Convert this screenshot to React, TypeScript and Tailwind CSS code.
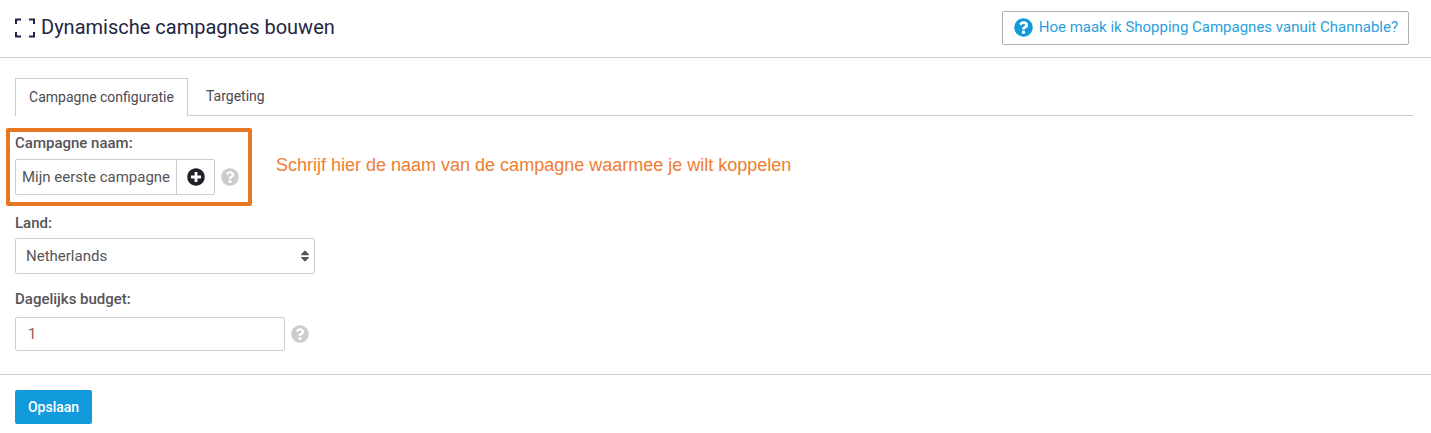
import { FaPlusCircle, FaQuestionCircle, FaSort } from 'react-icons/fa';

const App = () => {
  return (
    <div className="h-[433px] w-[1431px] overflow-hidden bg-white font-['Roboto',sans-serif] text-[14px] text-[#555459]">
      {/* Header */}
      <div className="flex h-[58px] items-center justify-between border-b border-[#cccccc] pl-[15px] pr-[22px]">
        <div className="-mt-[2px] flex items-center gap-[6px]">
          <svg width="20" height="20" viewBox="0 0 20 20" fill="none" stroke="#1e2742" strokeWidth="2">
            <path d="M1 6V1.5H6" />
            <path d="M14 1.5H19V6" />
            <path d="M1 14V18.5H6" />
            <path d="M14 18.5H19V14" />
          </svg>
          <h1 className="-mt-[2px] text-[20px] leading-[24px] text-[#1e2742]">Dynamische campagnes bouwen</h1>
        </div>
        <a className="-mt-[2px] flex h-[34px] items-center gap-[6px] rounded-[2px] border border-[#aeaebd] pl-[11px] pr-[10px] text-[15px] text-[#2a9fdc]">
          <FaQuestionCircle className="h-[19px] w-[19px] text-[#129bdb]" />
          Hoe maak ik Shopping Campagnes vanuit Channable?
        </a>
      </div>

      {/* Tabs */}
      <div className="ml-[15px] mr-[18px] mt-[20px] flex h-[38px] border-b border-[#cccccc]">
        <div className="flex h-[38px] w-[173px] items-center justify-center border border-b-0 border-[#cccccc] bg-white text-[#4a4a55]">
          Campagne configuratie
        </div>
        <div className="flex h-[37px] items-center pl-[18px] text-[#4a4a55]">Targeting</div>
      </div>

      {/* Form */}
      <div className="mt-[12px] flex items-start">
        <div className="ml-[6px] h-[78px] w-[246px] rounded-[2px] border-[4px] border-[#e87722] pl-[5px]">
          <label className="block pt-[2px] text-[15px] font-medium leading-[18px]">Campagne naam:</label>
          <div className="mt-[7px] flex items-center">
            <div className="flex h-[36px] w-[200px] rounded-[2px] border border-[#cccccc]">
              <div className="flex w-[161px] items-center whitespace-nowrap border-r border-[#cccccc] pl-[6px] text-[15px] text-[#555459]">Mijn eerste campagne</div>
              <div className="flex flex-1 items-center justify-center">
                <FaPlusCircle className="h-[18px] w-[18px] text-[#1f2329]" />
              </div>
            </div>
            <FaQuestionCircle className="ml-[6px] h-[18px] w-[18px] text-[#cccccc]" />
          </div>
        </div>
        <p className="ml-[24px] mt-[27px] font-['Liberation_Sans',sans-serif] text-[18px] leading-[20px] text-[#ed7d31]">
          Schrijf hier de naam van de campagne waarmee je wilt koppelen
        </p>
      </div>

      <div className="pl-[15px]">
        <label className="mt-[8px] block text-[15px] font-medium leading-[18px]">Land:</label>
        <div className="mt-[6px] flex h-[36px] w-[300px] items-center justify-between rounded-[2px] border border-[#cccccc] pl-[10px] pr-[2px] text-[15px]">
          <span>Netherlands</span>
          <FaSort className="h-[14px] w-[14px] text-[#555459]" />
        </div>

        <label className="mt-[16px] block text-[15px] font-medium leading-[18px]">Dagelijks budget:</label>
        <div className="mt-[9px] flex items-center">
          <div className="flex h-[34px] w-[270px] items-center rounded-[2px] border border-[#cccccc] pl-[12px] text-[15px] text-[#9b5a4a]">1</div>
          <FaQuestionCircle className="ml-[6px] h-[18px] w-[18px] text-[#cccccc]" />
        </div>
      </div>

      {/* Footer */}
      <div className="mt-[23px] border-t border-[#cccccc] pl-[15px] pt-[15px]">
        <button className="h-[34px] w-[77px] rounded-[2px] bg-[#129bdb] text-[14px] font-medium text-white">Opslaan</button>
      </div>
    </div>
  );
};

export default App;
